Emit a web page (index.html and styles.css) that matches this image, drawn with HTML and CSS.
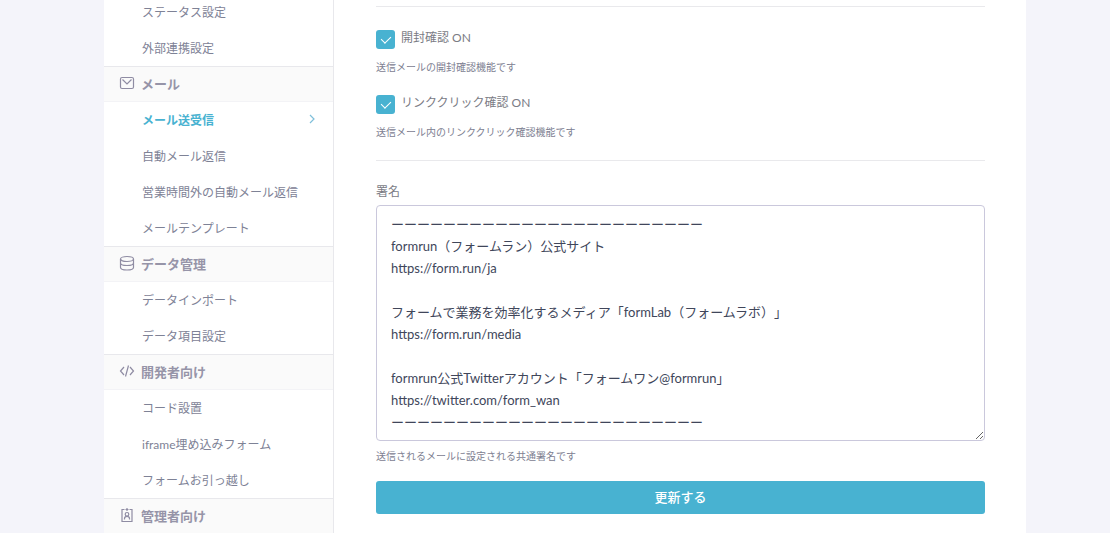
FILE: index.html
```html
<!DOCTYPE html>
<html lang="ja">
<head>
    <meta charset="UTF-8">
    <meta name="viewport" content="width=device-width, initial-scale=1.0">
    <title>メール送受信</title>
    <link rel="stylesheet" href="styles.css">
</head>
<body>
    <div class="page">
        <nav class="sidebar">
            <ul>
                <li><a href="#">ステータス設定</a></li>
                <li><a href="#">外部連携設定</a></li>
            </ul>

            <h2>
                <svg viewBox="0 0 16 16"><rect x="1.5" y="2.5" width="13" height="11" rx="1.5"/><path d="M3.5 4.5L8 9l4.5-4.5"/></svg>
                メール
            </h2>
            <ul>
                <li>
                    <a href="#" class="active">メール送受信
                        <svg class="arrow" viewBox="0 0 8 10"><path d="M2 1l4 4-4 4"/></svg>
                    </a>
                </li>
                <li><a href="#">自動メール返信</a></li>
                <li><a href="#">営業時間外の自動メール返信</a></li>
                <li><a href="#">メールテンプレート</a></li>
            </ul>

            <h2>
                <svg viewBox="0 0 16 16"><ellipse cx="8" cy="4" rx="6.5" ry="2.5"/><path d="M1.5 4v8.500c0 1.400 2.900 2.500 6.500 2.500s6.500-1.100 6.500-2.500V4M1.500 8c0 1.400 2.900 2.500 6.500 2.500s6.500-1.100 6.500-2.500"/></svg>
                データ管理
            </h2>
            <ul>
                <li><a href="#">データインポート</a></li>
                <li><a href="#">データ項目設定</a></li>
            </ul>

            <h2>
                <svg viewBox="0 0 16 16"><path d="M5 4L1.500 8 5 12M11 4l3.500 4-3.500 4M9.500 2.500l-3 11"/></svg>
                開発者向け
            </h2>
            <ul>
                <li><a href="#">コード設置</a></li>
                <li><a href="#">iframe埋め込みフォーム</a></li>
                <li><a href="#">フォームお引っ越し</a></li>
            </ul>

            <h2>
                <svg viewBox="0 0 16 16"><path d="M5.500 2.500H3v12h10v-12h-2.500M8 1v3M6.500 2.500h3M5.500 12.500v-1c0-1.600 1-2.200 2.500-2.200s2.500.6 2.500 2.200v1"/><circle cx="8" cy="7.300" r="1.800"/></svg>
                管理者向け
            </h2>
        </nav>

        <main class="content">
            <form>
                <section class="checks">
                    <div class="check">
                        <input type="checkbox" id="open" checked>
                        <label for="open">開封確認 ON</label>
                    </div>
                    <p class="help">送信メールの開封確認機能です</p>
                    <div class="check">
                        <input type="checkbox" id="click" checked>
                        <label for="click">リンククリック確認 ON</label>
                    </div>
                    <p class="help">送信メール内のリンククリック確認機能です</p>
                </section>

                <label class="field-label" for="signature">署名</label>
                <textarea id="signature" rows="10">ーーーーーーーーーーーーーーーーーーーーーーーー
formrun（フォームラン）公式サイト
https://form.run/ja

フォームで業務を効率化するメディア「formLab（フォームラボ）」
https://form.run/media

formrun公式Twitterアカウント「フォームワン@formrun」
https://twitter.com/form_wan
ーーーーーーーーーーーーーーーーーーーーーーーー</textarea>
                <p class="help">送信されるメールに設定される共通署名です</p>
                <button type="submit">更新する</button>
            </form>
        </main>
    </div>
</body>
</html>
```

FILE: styles.css
```css
* {
    box-sizing: border-box;
}
body {
    margin: 0;
    height: 100vh;
    overflow: hidden;
    padding: 0 84px 0 104px;
    background: #f4f4fa;
    color: #7d8091;
    font-family: Lato, "Noto Sans CJK JP", sans-serif;
    font-size: 12px;
}
.page {
    display: flex;
    min-height: 100vh;
    background: #fff;
}
.sidebar {
    flex: 0 0 230px;
    margin-top: -6px;
    border-right: 1px solid #e8e8ec;
}
.sidebar ul {
    margin: 0;
    padding: 0;
    list-style: none;
}
.sidebar h2 {
    display: flex;
    align-items: center;
    gap: 6px;
    height: 36px;
    margin: 0;
    padding: 0 15px 2px;
    background: #fafafa;
    border-top: 1px solid #e8e8ec;
    border-bottom: 1px solid #f3f3f6;
    color: #9694a8;
    font-size: 13px;
    font-weight: bold;
}
.sidebar svg {
    width: 16px;
    height: 16px;
    fill: none;
    stroke: #8f8ca3;
    stroke-width: 1.2;
}
.sidebar a {
    display: flex;
    align-items: center;
    justify-content: space-between;
    height: 36px;
    padding: 0 17px 2px 38px;
    color: #7e8296;
    text-decoration: none;
}
.sidebar a.active {
    color: #48b2d1;
    font-weight: bold;
}
.sidebar .arrow {
    width: 8px;
    height: 10px;
    stroke: #7fbfda;
}
.content {
    flex: 1;
    padding: 6px 41px 0 42px;
}
.checks {
    padding: 23px 0 20px;
    margin-bottom: 23px;
    border-top: 1px solid #e9e9ec;
    border-bottom: 1px solid #e9e9ec;
}
.check {
    display: flex;
    gap: 6px;
    height: 20px;
}
.check label {
    line-height: 16px;
}
.check input {
    appearance: none;
    display: flex;
    justify-content: center;
    width: 19px;
    height: 19px;
    margin: 0;
    background: #48b2d1;
    border-radius: 3px;
}
.check input::after {
    content: "";
    width: 5px;
    height: 8px;
    margin-top: 4px;
    border: solid #fff;
    border-width: 0 1px 1px 0;
    transform: rotate(45deg);
}
.check label,
.field-label {
    color: #7b7c85;
}
.help {
    margin: 9px 0 20px;
    font-size: 10px;
    line-height: 16px;
}
.checks .help:last-child {
    margin-bottom: 0;
}
.field-label {
    display: block;
    line-height: 16px;
    margin-bottom: 5px;
}
textarea {
    display: block;
    width: 100%;
    padding: 7px 14px;
    border: 1px solid #cac8dc;
    border-radius: 4px;
    color: #40465a;
    font: 13px/22px Lato, "Noto Sans CJK JP", sans-serif;
    text-spacing-trim: space-all;
}
textarea + .help {
    margin: 7px 0 17px;
}
button {
    width: 100%;
    height: 33px;
    padding: 0 0 2px;
    background: #48b2d1;
    border: none;
    border-radius: 3px;
    color: #fff;
    font: 500 13px Lato, "Noto Sans CJK JP", sans-serif;
    cursor: pointer;
}
```
